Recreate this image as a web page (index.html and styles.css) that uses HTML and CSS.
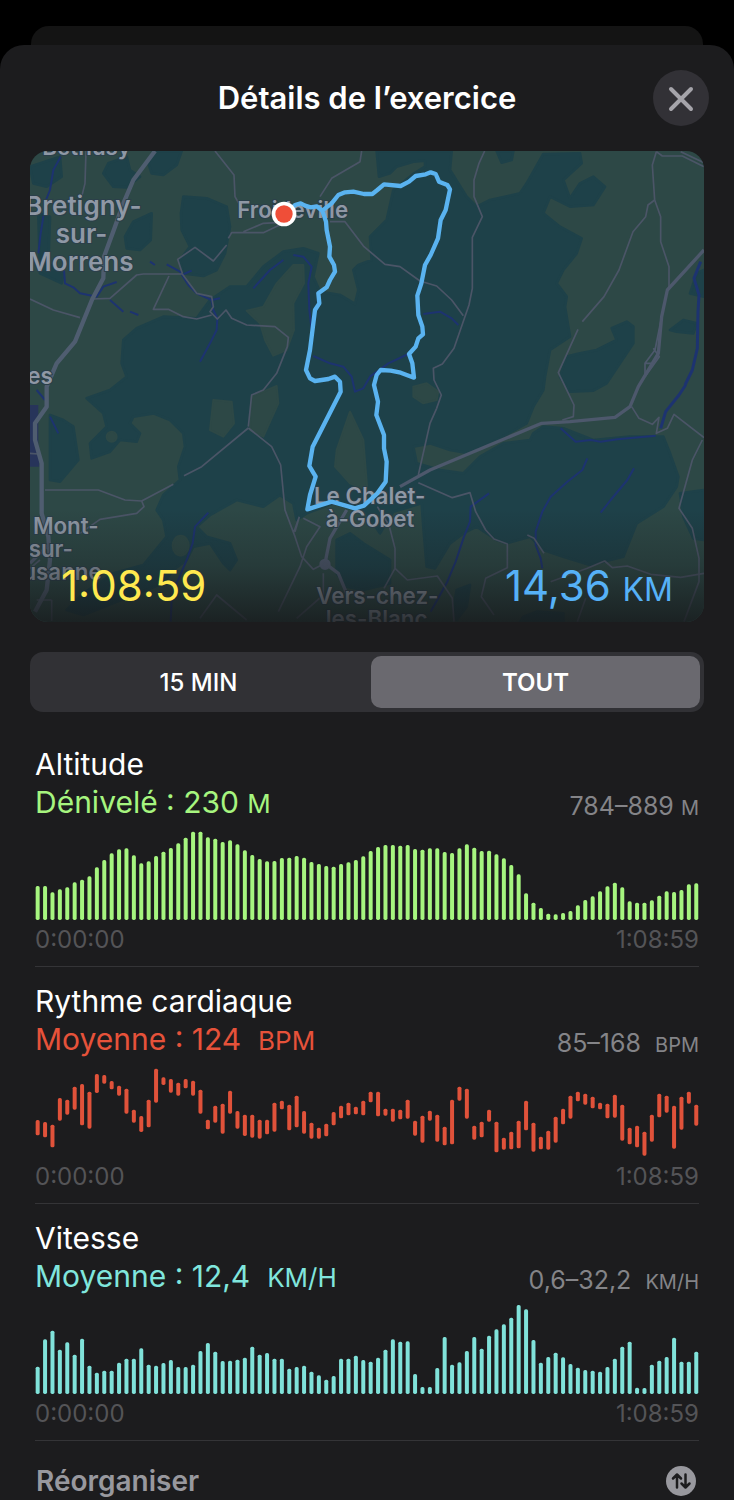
FILE: index.html
```html
<!DOCTYPE html>
<html lang="fr">
<head>
<meta charset="utf-8">
<meta name="viewport" content="width=device-width, initial-scale=1">
<title>Détails de l’exercice</title>
<link rel="stylesheet" href="styles.css">
</head>
<body>
<div class="back-sheet"></div>
<main class="sheet">
  <header class="header">
    <h1 class="title">Détails de l’exercice</h1>
    <button class="close" type="button" aria-label="Fermer">
      <svg viewBox="0 0 56 56" width="56" height="56" aria-hidden="true"><path d="M18 19L38 39M38 19L18 39"/></svg>
    </button>
  </header>

  <section class="map" aria-label="Parcours">
    <svg class="map-art" viewBox="0 3 2022 1413" preserveAspectRatio="xMidYMid slice" aria-hidden="true">
      <defs>
        <linearGradient id="fade" x1="0" y1="0" x2="0" y2="1">
          <stop offset="0" stop-color="#16181a" stop-opacity="0"/>
          <stop offset="0.76" stop-color="#16181a" stop-opacity="0"/>
          <stop offset="0.88" stop-color="#16181a" stop-opacity="0.28"/>
          <stop offset="1" stop-color="#16181a" stop-opacity="0.8"/>
        </linearGradient>
      </defs>
      <rect class="ground" x="0" y="0" width="2022" height="1420"/>
      <g class="forest">
        <path d="M0 50L90 20 95 80 50 110 10 100Z"/>
        <path d="M25 190L60 200 55 340 100 370 95 400 30 370Z"/>
        <path d="M235 40L290 20 300 60 330 80 290 112 250 110 220 70Z"/>
        <path d="M355 40L370 3H455L440 45 400 75 365 70Z"/>
        <path d="M285 260L310 215 365 190 362 270 330 300 290 295Z"/>
        <path d="M460 140L530 145 590 170 600 230 585 310 560 360 520 378 460 370 450 330 480 290 455 240 453 190Z"/>
        <path d="M1040 3L1047 80 1080 70 1100 50 1150 35 1185 32 1185 50 1150 72 1090 120 1070 210 1020 260 1025 330 985 345 970 360 985 420 975 462 930 435 870 425 850 380 865 310 820 295 760 305 700 350 650 410 600 410 540 450 500 505 400 500 320 535 280 570 275 640 290 680 240 720 170 745 220 790 230 830 180 880 185 925 240 905 270 870 320 875 330 850 300 820 310 800 370 790 420 810 460 850 465 890 445 950 450 990 400 1035 380 1080 400 1110 410 1160 340 1245 250 1270 160 1330 110 1380 160 1395 400 1300 430 1260 470 1230 490 1190 540 1180 580 1240 600 1260 620 1230 600 1180 530 1160 500 1130 540 1095 620 1050 700 1070 750 1035 790 1060 800 1110 830 1090 910 1060 1010 1090 1050 1150 1090 1085 1175 1060 1180 1130 1190 1250 1215 1255 1260 1180 1300 1150 1340 1130 1400 1170 1430 1180 1500 1160 1540 1200 1600 1220 1680 1245 1780 1220 1820 1120 1900 1070 1940 1010 1945 980 1920 910 1900 860 1800 860 1690 870 1600 835 1540 830 1510 850 1500 870 1420 880 1350 920 1300 970 1230 960 1160 940 1150 890 1200 880 1260 900 1320 910 1400 870 1490 820 1510 770 1540 720 1545 680 1560 600 1620 560 1605 470 1610 440 1580 400 1600 360 1640 310 1655 265 1590 230 1540 190 1560 140 1620 170 1690 165 1725 110 1690 80 1650 100 1620 145 1600 90 1655 40 1650 10 1540 12 1490 100 1470 130 1380 150 1340 170 1310 140 1260 60 1265 3Z"/>
        <path d="M1610 620L1650 610 1700 600 1760 570 1745 535 1790 515 1810 530 1810 580 1770 640 1730 700 1690 722 1620 725 1590 680Z"/>
        <path d="M1920 540L1960 510 2000 520 1990 550 1940 545Z"/>
        <path d="M2000 370L2022 360V440L1980 430Z"/>
        <path d="M1950 1030L2022 1020V1170L1990 1165 1960 1100Z"/>
        <path d="M1280 1320L1320 1305 1310 1370 1280 1410 1270 1380Z"/>
        <path d="M60 795L100 810 130 830 145 930 90 995 60 990Z"/>
        <path d="M920 1170L960 1150 1000 1180 1080 1230 1080 1300 1000 1320 950 1310 920 1270Z"/>
        <path d="M1480 1400L1520 1385 1600 1390V1416H1470Z"/>
        <path d="M1400 3H1450L1445 30 1415 38Z"/>
      </g>
      <g class="clearing">
        <path d="M650 482L700 470 740 400 790 345 820 345 822 400 790 460 792 540 770 600 730 617 705 570 690 520Z"/>
        <path d="M550 750L605 755 612 820 580 860 540 840Z"/>
        <path d="M665 740L740 708 745 760 700 860 660 840Z"/>
        <path d="M920 900L960 785 1000 870 1012 1020 960 1000 915 950Z"/>
        <path d="M1150 710L1190 700 1225 725 1220 750 1180 760 1150 740Z"/>
        <circle cx="245" cy="860" r="15"/>
        <ellipse cx="452" cy="1187" rx="24" ry="30"/>
      </g>
      <path class="town" d="M0 765H25V900L28 950H0Z"/>

      <g class="stream">
        <path d="M92 20L70 60 60 120 48 150 40 200 32 250 25 310"/>
        <path d="M102 360L105 400 130 412 150 430 200 440 220 410 260 396"/>
        <path d="M240 450L280 485M300 485L325 495M360 335L375 345M410 343L450 365 475 405 500 430 545 450 570 445M485 362L455 375"/>
        <path d="M545 450L550 480 562 505 560 540 540 580 510 635"/>
        <path d="M790 315L820 320 845 350 835 400 838 480 845 540"/>
        <path d="M670 415L720 360 760 330"/>
        <path d="M850 618L900 640 940 650 965 680 975 725 1000 715 1020 680 1075 640 1135 612M1180 492L1230 485 1265 505 1285 525"/>
        <path d="M535 1088L495 1130 488 1180 470 1230 440 1300 425 1350 422 1415"/>
        <path d="M20 720L45 750M60 800L85 850"/>
      </g>
      <g class="stream" transform="translate(1002 705)">
        <path d="M375 325L320 365 318 410 300 455 275 530 250 590 200 680"/>
        <path d="M670 220L655 255 610 290 560 335 535 380 515 440 515 480 530 520 535 550"/>
        <path d="M810 250L790 285 740 345 710 383"/>
        <path d="M590 130L635 170 680 165 710 170 760 163 875 152"/>
        <path class="wide" d="M890 130L905 80 945 30 965 0"/>
        <path class="wide" d="M963 0L985 -45 1000 -110 1002 -220 1005 -270 990 -320 1010 -370"/>
      </g>

      <g class="road">
        <path d="M168 3L165 100 150 160"/>
        <path d="M555 3L612 75 615 140 635 175"/>
        <path d="M995 3L990 35 905 85 870 140"/>
        <path d="M760 220L700 248 605 248 595 265M640 245L700 220 740 218"/>
        <path d="M590 285L550 333 495 292 443 328 457 370M187 447L240 445 320 375 340 372 457 372 500 430 545 440 550 470 540 485 562 507 588 480 605 505 650 525 735 530 775 562 772 590 740 670 700 720 665 735 655 830"/>
        <path d="M417 378L370 478 415 478 460 500 500 507 545 495"/>
        <path d="M0 447L70 480 150 503"/>
        <path d="M900 215L945 215 1002 290 1065 343 1110 350 1170 393 1220 408 1265 450 1300 497"/>
        <path d="M655 834L515 950 462 977M430 1003L335 1053 285 1050 205 1020H45M335 1053L342 1070 320 1090 210 1108 150 1150"/>
        <path d="M655 834L725 890 752 945 765 1080 795 1160 815 1220 850 1258 885 1240M808 1100L790 1150M820 1105L870 1130 830 1190 810 1250 745 1385M808 1100L795 1145"/>
        <path d="M510 1405L560 1335 650 1410M800 1405L880 1335 880 1270"/>
        <path d="M0 1255L30 1230M65 1350H20M65 1350V1413M0 910L25 912"/>
      </g>
      <g class="road" transform="translate(1002 0)">
        <path d="M362 3L345 40 330 90V140L355 200 325 262V415L315 465 270 595 235 642 208 655 210 690 232 735 218 775 198 820 163 975"/>
        <path d="M877 5L865 45 872 150 890 200V275L915 350V420"/>
        <path d="M877 5L895 18H955L1020 50M950 5L1020 38"/>
        <path d="M872 150L852 165 845 200 807 245 765 360 720 440 655 515M642 538L583 668 630 765 628 800 595 810"/>
      </g>
      <g class="road" transform="translate(1002 705)">
        <path d="M163 293L265 338 318 323 335 380 365 435 390 462 430 477V548L365 580 352 635 390 690"/>
        <path d="M40 365L75 420 93 490 93 550 130 585 220 573 265 640 270 710M93 550L60 610"/>
        <path d="M803 65L825 100 865 118 885 97 877 145 910 130 930 88 1020 158M1015 165L985 225 945 370 985 430 1005 520 1005 590 960 710"/>
        <path d="M490 450L510 460 540 505M560 590L670 550 722 528 745 548 790 543 860 568 950 577 1020 565M665 640L640 710"/>
      </g>
      <g class="highway">
        <path d="M375 3L310 90 280 160 255 230 222 320 220 385 187 447 135 575 80 640 50 710 50 770 15 820 15 870 35 940V1090L55 1160 60 1230 50 1320 15 1385"/>
      </g>
      <g class="avenue">
        <path d="M2022 300L1912 420 1895 500 1885 610 1825 710 1800 770 1755 802 1620 815 1535 820 1200 960 1110 1010"/>
        <path class="link" d="M1895 500L1875 600 1845 640 1845 680M1870 595L1888 620 1845 680M1845 640H1870"/>
        <path d="M950 1080L900 1165 885 1240M885 1240L925 1270 950 1330M60 1180L0 1240"/>
        <circle class="hub" cx="885" cy="1243" r="12"/>
      </g>

      <g class="place">
        <text class="small" x="170" y="14" text-anchor="middle">Béthusy</text>
        <text class="large" x="160" y="196" text-anchor="middle">Bretigny-</text>
        <text class="large" x="155" y="280" text-anchor="middle">sur-</text>
        <text class="large" x="152" y="362" text-anchor="middle">Morrens</text>
        <text class="small" x="788" y="203" text-anchor="middle">Froideville</text>
        <text class="small" x="68" y="701" text-anchor="end">es</text>
        <text class="small" x="1019" y="1063" text-anchor="middle">Le Chalet-</text>
        <text class="small" x="1020" y="1131" text-anchor="middle">à-Gobet</text>
        <text class="small" x="206" y="1151" text-anchor="end">Mont-</text>
        <text class="small" x="129" y="1221" text-anchor="end">sur-</text>
        <text class="small" x="215" y="1290" text-anchor="end">Lausanne</text>
        <text class="small" x="1042" y="1363" text-anchor="middle">Vers-chez-</text>
        <text class="small" x="1040" y="1430" text-anchor="middle">les-Blanc</text>
      </g>
      <rect x="0" y="0" width="2022" height="1420" fill="url(#fade)"/>

      <path class="route" d="M770 190L795 165 812 160 825 167 842 172 860 169 877 182 905 160 925 135 945 127 970 125 1002 132 1027 132 1042 120 1062 103 1112 108 1137 95 1157 78 1187 73 1202 67 1217 72 1227 95 1252 105 1260 118 1247 180 1232 210 1224 265 1202 315 1185 345 1174 400 1162 437 1165 495 1177 530 1179 553 1165 565 1157 590 1137 612 1147 640 1152 683 1112 668 1082 662 1052 660 1040 675 1032 705 1044 755 1039 795 1062 855 1062 895 1070 935 1067 995 1042 1030 1002 1067 975 1075 905 1055 832 1078 840 1035 857 980 848 965 838 948 848 890 932 725 930 695 915 680 895 687 855 693 840 685 828 660 840 600 850 520 855 480 868 460 865 430 890 412 900 390 915 365 912 345 898 320 900 290 890 240 888 215 877 182"/>
      <circle class="marker-ring" cx="762" cy="192" r="37"/>
      <circle class="marker" cx="762" cy="192" r="26"/>
    </svg>
    <div class="stats">
      <span class="duration">1:08:59</span>
      <span class="distance">14,36 <span class="unit">KM</span></span>
    </div>
  </section>

  <div class="segments" role="group" aria-label="Période">
    <button class="segment" type="button" aria-pressed="false">15 MIN</button>
    <button class="segment" type="button" aria-pressed="true">TOUT</button>
  </div>

  <section class="metric altitude">
    <h2 class="name">Altitude</h2>
    <div class="summary">
      <span class="value">Dénivelé : 230 <span class="unit">M</span></span>
      <span class="range">784–889 <span class="unit">M</span></span>
    </div>
    <svg class="chart" viewBox="0 0 1992 267" data-chart="altitude" role="img" aria-label="Altitude"></svg>
    <div class="times"><span>0:00:00</span><span>1:08:59</span></div>
  </section>

  <section class="metric heart">
    <h2 class="name">Rythme cardiaque</h2>
    <div class="summary">
      <span class="value">Moyenne : 124&nbsp; <span class="unit">BPM</span></span>
      <span class="range">85–168&nbsp; <span class="unit">BPM</span></span>
    </div>
    <svg class="chart" viewBox="0 0 1992 267" data-chart="heart" role="img" aria-label="Rythme cardiaque"></svg>
    <div class="times"><span>0:00:00</span><span>1:08:59</span></div>
  </section>

  <section class="metric speed">
    <h2 class="name">Vitesse</h2>
    <div class="summary">
      <span class="value">Moyenne : 12,4&nbsp; <span class="unit">KM/H</span></span>
      <span class="range">0,6–32,2&nbsp; <span class="unit">KM/H</span></span>
    </div>
    <svg class="chart" viewBox="0 0 1992 267" data-chart="speed" role="img" aria-label="Vitesse"></svg>
    <div class="times"><span>0:00:00</span><span>1:08:59</span></div>
  </section>

  <button class="reorder" type="button">
    <span>Réorganiser</span>
    <svg viewBox="0 0 30 30" width="30" height="30" aria-hidden="true">
      <circle cx="15" cy="15" r="15"/>
      <path d="M11 21.500V9M7 12.500L11 8.500 15 12.500M19.500 8.500V21M15.500 17.500L19.500 21.500 23.500 17.500"/>
    </svg>
  </button>
</main>
<script src="charts.js"></script>
</body>
</html>
```
FILE: styles.css
```css
* { box-sizing: border-box; }

body {
  margin: 0;
  min-height: 100vh;
  display: flex;
  flex-direction: column;
  background: #000;
  color: #fff;
  font-family: Inter, "Liberation Sans", sans-serif;
}

button {
  border: 0;
  padding: 0;
  background: none;
  color: inherit;
  font: inherit;
}

.back-sheet {
  height: 19px;
  margin: 26px 31px 0;
  border-radius: 18px 18px 0 0;
  background: #141414;
}

.sheet {
  flex: 1;
  display: flex;
  flex-direction: column;
  background: #1c1c1e;
  border-radius: 24px 24px 0 0;
}

.header {
  display: grid;
  grid-template-columns: 56px 1fr 56px;
  align-items: center;
  padding: 25px;
}

.title {
  grid-column: 2;
  margin: 0;
  text-align: center;
  font-size: 31px;
  line-height: 38px;
  font-weight: 600;
}

.close {
  width: 56px;
  height: 56px;
  border-radius: 50%;
  background: #323136;
}

.close svg {
  display: block;
  fill: none;
  stroke: #a5a4aa;
  stroke-width: 4;
  stroke-linecap: round;
}

.map {
  position: relative;
  margin: 0 30px;
  border-radius: 18px;
  overflow: hidden;
}

.map-art { display: block; width: 100%; }

.ground, .clearing { fill: #2d4846; }
.forest { fill: #1e4149; stroke: #1e4149; stroke-width: 8; stroke-linejoin: round; }
.clearing { stroke: #2d4846; stroke-width: 6; stroke-linejoin: round; }
.town { fill: #27345a; }
.stream { fill: none; stroke: #1d3370; stroke-width: 6; stroke-linejoin: round; }
.stream .wide { stroke-width: 9; }
.road { fill: none; stroke: #4b5567; stroke-width: 5; stroke-linejoin: round; }
.highway { fill: none; stroke: #4f5d70; stroke-width: 13; stroke-linejoin: round; }
.avenue { fill: none; stroke: #4d586c; stroke-width: 10; stroke-linejoin: round; }
.avenue .link { stroke-width: 5; }
.avenue .hub { fill: #4d586c; }
.place { fill: #8f98a5; stroke: #2b3f4a; stroke-width: 6; paint-order: stroke; font-weight: 600; }
.place .large { font-size: 78px; }
.place .small { font-size: 67px; }
.route { fill: none; stroke: #5ab3f0; stroke-width: 13; stroke-linejoin: round; }
.marker-ring { fill: #fff; }
.marker { fill: #ef4e38; }

.stats {
  position: absolute;
  left: 31px;
  right: 31px;
  bottom: 12px;
  display: flex;
  justify-content: space-between;
  align-items: baseline;
  font-size: 42px;
  line-height: 48px;
}

.duration { color: #ffe94f; }
.distance { color: #56b1f7; }
.distance .unit { font-size: 32px; line-height: 1; }

.segments {
  display: grid;
  grid-template-columns: 1fr 1fr;
  gap: 8px;
  margin: 30px 30px 18px;
  padding: 4px;
  border-radius: 13px;
  background: #313135;
}

.segment {
  height: 52px;
  border-radius: 10px;
  font-size: 24px;
  font-weight: 500;
}

.segment[aria-pressed="true"] { background: #6a696f; font-weight: 600; }

.metric {
  margin: 0 35px;
  padding: 15px 0 12px;
  border-bottom: 1px solid #343437;
}

.name {
  margin: 0;
  font-size: 30px;
  line-height: 38px;
  font-weight: 400;
}

.summary {
  display: flex;
  justify-content: space-between;
  align-items: flex-end;
  margin-bottom: 10px;
}

.value { font-size: 30px; line-height: 38px; }
.value .unit { font-size: 26px; line-height: 1; }
.range { font-size: 25px; line-height: 30px; color: #848488; }
.range .unit { font-size: 20px; line-height: 1; }

.altitude .value { color: #a6f57f; }
.altitude .chart { fill: #a6f57f; }
.heart .value { color: #e6523a; }
.heart .chart { fill: #e0523a; }
.speed .value { color: #80e6dd; }
.speed .chart { fill: #80e2da; }

.chart { display: block; width: 100%; }

.times {
  display: flex;
  justify-content: space-between;
  margin-top: 6px;
  font-size: 24px;
  line-height: 28px;
  color: #545457;
}

.reorder {
  display: flex;
  justify-content: space-between;
  align-items: center;
  padding: 25px 38px 3px 36px;
  font-size: 28px;
  line-height: 30px;
  font-weight: 600;
  color: #98989e;
}

.reorder circle { fill: #98989e; }

.reorder path {
  fill: none;
  stroke: #1c1c1e;
  stroke-width: 2.5;
  stroke-linecap: round;
  stroke-linejoin: round;
}
```
FILE: charts.js
```js
// Each sample is [top, bottom] in chart units; single numbers are bar heights.
const HEIGHT = 267;
const STEP = 22.2;

const series = {
  altitude: [
    102,102,83,92,98,113,121,131,158,180,200,212,215,194,170,176,192,205,216,230,247,265,265,248,244,234,239,227,209,195,
    183,176,177,186,187,192,187,174,168,162,160,168,173,180,191,207,219,225,225,223,225,213,211,215,215,204,201,215,227,217,
    207,208,197,185,165,137,80,52,36,19,17,21,27,44,60,71,86,101,112,98,56,52,52,59,73,86,84,90,107,110
  ],
  heart: [
    [156,202],[162,208],[170,238],[90,158],[95,140],[56,125],[48,172],[71,182],[18,75],[21,47],
    [39,64],[53,83],[62,137],[125,164],[144,192],[95,178],[2,104],[28,51],[33,74],[44,83],
    [33,61],[38,83],[65,137],[155,184],[113,164],[107,197],[68,137],[129,182],[140,204],[140,209],
    [155,212],[155,199],[104,191],[98,124],[110,187],[83,178],[129,197],[164,212],[179,212],[167,205],
    [132,172],[113,151],[104,142],[116,139],[98,142],[71,103],[71,145],[122,143],[122,161],[125,154],
    [95,152],[158,203],[143,224],[128,158],[140,221],[176,232],[95,229],[56,98],[62,152],[173,215],
    [161,208],[125,161],[161,253],[209,245],[191,244],[158,241],[98,187],[164,251],[206,244],[188,245],
    [146,224],[122,169],[83,152],[71,100],[77,110],[86,121],[104,124],[107,151],[80,149],[110,218],
    [179,229],[173,238],[191,263],[140,221],[77,148],[83,134],[113,242],[86,185],[71,107],[110,173]
  ],
  speed: [
    82,164,190,133,155,118,166,85,64,70,70,94,106,106,137,88,85,93,102,81,81,88,129,153,127,99,100,103,109,142,
    118,123,106,106,76,81,85,67,56,43,54,106,106,115,102,97,109,133,164,157,158,60,21,21,78,171,88,95,129,171,
    136,175,194,209,229,267,254,162,94,111,124,110,90,79,72,70,67,81,106,142,157,19,18,88,100,111,169,97,97,127
  ]
};

document.querySelectorAll("[data-chart]").forEach((chart) => {
  series[chart.dataset.chart].forEach((sample, i) => {
    const [top, bottom] = Array.isArray(sample) ? sample : [HEIGHT - sample, HEIGHT];
    const bar = document.createElementNS("http://www.w3.org/2000/svg", "rect");
    bar.setAttribute("x", 2 + i * STEP);
    bar.setAttribute("y", top);
    bar.setAttribute("width", 12);
    bar.setAttribute("height", bottom - top);
    bar.setAttribute("rx", 5);
    chart.appendChild(bar);
  });
});
```
